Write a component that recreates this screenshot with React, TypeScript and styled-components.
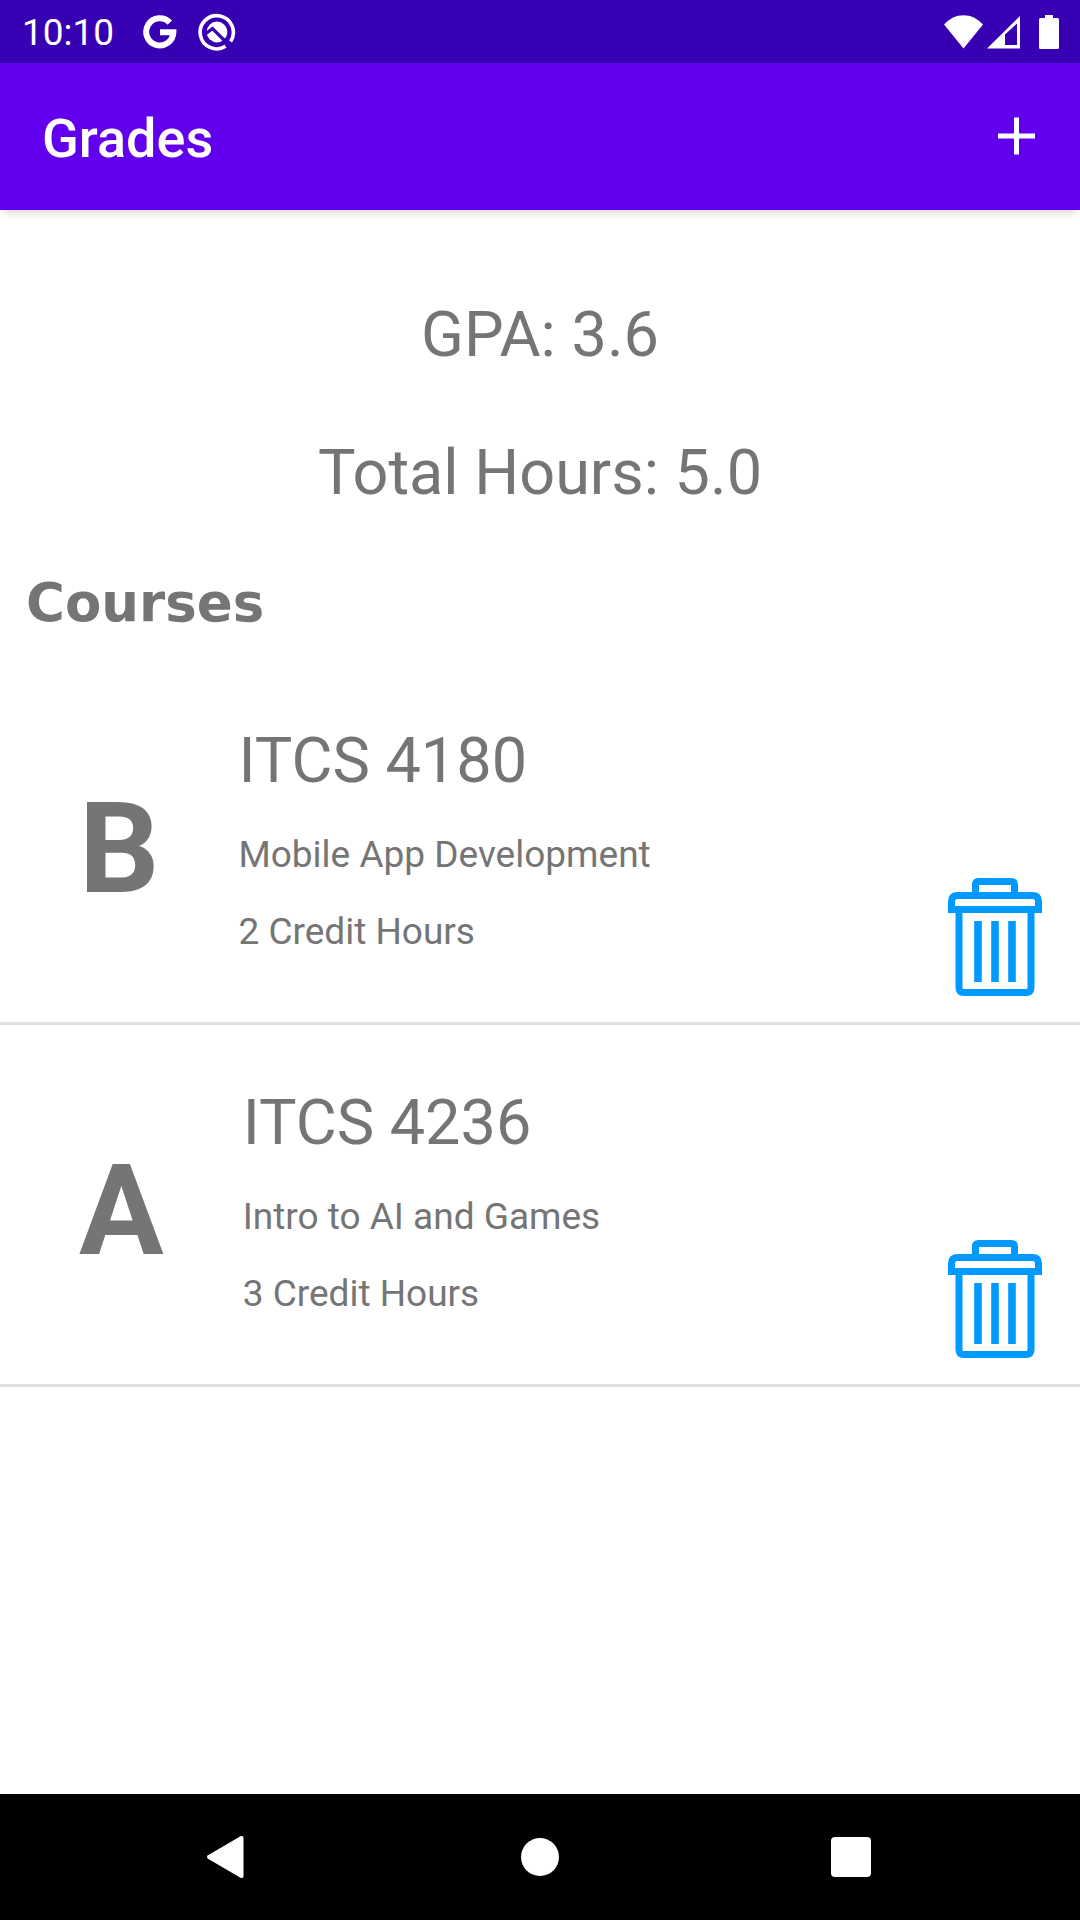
import React, { useState } from "react";
import styled, { createGlobalStyle } from "styled-components";

const GlobalStyle = createGlobalStyle`
  *, *::before, *::after { box-sizing: border-box; }
  body { margin: 0; background: #fff; font-family: Roboto, "Noto Sans", sans-serif; color: #757575; }
  h1, h2, h3, p, ul { margin: 0; padding: 0; }
`;

const Screen = styled.div`
  display: flex;
  flex-direction: column;
  min-height: 100vh;
`;

const StatusBar = styled.div`
  display: flex;
  align-items: center;
  justify-content: space-between;
  height: 63px;
  padding: 0 21px 0 22px;
  background: #3700b3;
  color: #fff;
`;

const StatusGroup = styled.div<{ $gap: number }>`
  display: flex;
  align-items: center;
  gap: ${(p) => p.$gap}px;
`;

const Clock = styled.time`
  margin-right: 8px;
  padding-top: 3px;
  font-size: 37px;
  line-height: 42px;
`;

const BatterySlot = styled.span`
  display: flex;
  padding-left: 15px;
`;

const AppBar = styled.header`
  display: flex;
  align-items: center;
  justify-content: space-between;
  height: 147px;
  padding: 0 32px 2px 42px;
  background: #6200ee;
  color: #fff;
  box-shadow: 0 7px 8px -4px rgba(0, 0, 0, 0.16);
`;

const Title = styled.h1`
  padding-top: 6px;
  font-size: 54px;
  font-weight: 500;
  line-height: 62px;
`;

const IconButton = styled.button`
  display: flex;
  align-items: center;
  justify-content: center;
  padding: 0;
  border: 0;
  background: none;
  color: inherit;
  cursor: pointer;
`;

const Main = styled.main`
  flex: 1;
`;

const Summary = styled.section`
  display: flex;
  flex-direction: column;
  gap: 54px;
  padding-top: 83px;
  text-align: center;
`;

const LargeText = styled.p`
  font-size: 63px;
  line-height: 84px;
`;

const SectionTitle = styled.h2`
  padding: 58px 26px 30px;
  font-family: "DejaVu Sans", Lato, sans-serif;
  font-size: 53px;
  font-weight: 700;
  line-height: 60px;
`;

const CourseList = styled.ul`
  list-style: none;
`;

const CourseRow = styled.li`
  display: flex;
  align-items: flex-start;
  gap: 79px;
  padding: 56px 38px 26px 79px;
  border-bottom: 3px solid #e0e0e0;
`;

const Grade = styled.strong`
  padding-top: 56px;
  font-size: 126px;
  font-weight: 700;
  line-height: 148px;
`;

const CourseInfo = styled.div`
  display: flex;
  flex: 1;
  flex-direction: column;
  gap: 26px;
  padding-bottom: 39px;
`;

const CourseCode = styled.h3`
  font-size: 63px;
  font-weight: 400;
  line-height: 84px;
`;

const Detail = styled.p`
  font-size: 37px;
  line-height: 51px;
`;

const DeleteButton = styled(IconButton)`
  align-self: flex-end;
  color: #0099ff;
`;

const NavBar = styled.nav`
  display: grid;
  grid-template-columns: repeat(3, 1fr);
  height: 126px;
  padding: 0 73px;
  background: #000;
  color: #fff;
`;

const GoogleIcon = () => (
  <svg width="34" height="34" viewBox="0 0 34 34" fill="none" stroke="currentColor" strokeWidth="6" aria-hidden="true">
    <path d="M26.8 7.6A13.6 13.6 0 1 0 30.4 17.2H17" />
  </svg>
);

const SearchBadgeIcon = () => (
  <svg width="38" height="38" viewBox="0 0 38 38" aria-hidden="true">
    <path d="M27.6 33.3A16.6 16.6 0 1 1 32.6 28.4" fill="none" stroke="currentColor" strokeWidth="3.6" />
    <circle cx="19" cy="19" r="10.4" fill="currentColor" />
    <path d="M8 20.5L14.5 15.5L31 32" fill="none" stroke="#3700b3" strokeWidth="3.2" />
  </svg>
);

const WifiIcon = () => (
  <svg width="39" height="34" viewBox="0 0 39 34" fill="currentColor" aria-hidden="true">
    <path d="M0 9.5C11-3 28-3 39 9.5L19.5 33.5Z" />
  </svg>
);

const SignalIcon = () => (
  <svg width="33" height="34" viewBox="0 0 33 34" fill="currentColor" fillRule="evenodd" aria-hidden="true">
    <path d="M33 1V33.5H0ZM30 8.500L18 19.500V30H30Z" />
  </svg>
);

const BatteryIcon = () => (
  <svg width="20" height="34" viewBox="0 0 20 34" fill="currentColor" aria-hidden="true">
    <path d="M6 0H14V3H18.500Q20 3 20 4.500V32.500Q20 34 18.500 34H1.500Q0 34 0 32.500V4.500Q0 3 1.500 3H6Z" />
  </svg>
);

const PlusIcon = () => (
  <svg width="64" height="64" viewBox="0 0 64 64" fill="currentColor" aria-hidden="true">
    <path d="M30 13.500H35V29.500H51V34.500H35V50.500H30V34.500H14V29.500H30Z" />
  </svg>
);

const TrashIcon = () => (
  <svg width="94" height="118" viewBox="0 0 94 118" fill="none" stroke="currentColor" strokeWidth="7" aria-hidden="true">
    <path d="M27.500 17V6.500Q27.500 3.500 30.500 3.500H63.500Q66.500 3.500 66.500 6.500V17" />
    <path d="M3.500 35V23.500Q3.500 17.500 9.500 17.500H84.500Q90.500 17.500 90.500 23.500V35M0 31.500H94" />
    <path d="M11 33V109.500Q11 114.500 16 114.500H78Q83 114.500 83 109.500V33" />
    <path d="M30 43V104M47 43V104M64 43V104" strokeWidth="7.600" />
  </svg>
);

const BackIcon = () => (
  <svg width="52" height="52" viewBox="0 0 52 52" fill="currentColor" aria-hidden="true">
    <path d="M5 24.200L37.500 5.300Q40.500 4 40.500 7V45Q40.500 48 37.500 46.700L5 27.800Q3 26 5 24.200Z" />
  </svg>
);

const HomeIcon = () => (
  <svg width="52" height="52" viewBox="0 0 52 52" fill="currentColor" aria-hidden="true">
    <circle cx="26" cy="26" r="19" />
  </svg>
);

const RecentsIcon = () => (
  <svg width="52" height="52" viewBox="0 0 52 52" fill="currentColor" aria-hidden="true">
    <rect x="6" y="6" width="40" height="40" rx="4" />
  </svg>
);

interface Course {
  code: string;
  name: string;
  hours: number;
  grade: "A" | "B" | "C" | "D" | "F";
}

const initialCourses: Course[] = [
  { code: "ITCS 4180", name: "Mobile App Development", hours: 2, grade: "B" },
  { code: "ITCS 4236", name: "Intro to AI and Games", hours: 3, grade: "A" },
];

const points = { A: 4, B: 3, C: 2, D: 1, F: 0 };

export default function App() {
  const [courses, setCourses] = useState(initialCourses);
  const hours = courses.reduce((sum, c) => sum + c.hours, 0);
  const total = courses.reduce((sum, c) => sum + c.hours * points[c.grade], 0);
  const gpa = hours ? total / hours : 0;

  return (
    <Screen>
      <GlobalStyle />
      <StatusBar>
        <StatusGroup $gap={21}>
          <Clock>10:10</Clock>
          <GoogleIcon />
          <SearchBadgeIcon />
        </StatusGroup>
        <StatusGroup $gap={4}>
          <WifiIcon />
          <SignalIcon />
          <BatterySlot>
            <BatteryIcon />
          </BatterySlot>
        </StatusGroup>
      </StatusBar>
      <AppBar>
        <Title>Grades</Title>
        <IconButton type="button" aria-label="Add course">
          <PlusIcon />
        </IconButton>
      </AppBar>
      <Main>
        <Summary>
          <LargeText>GPA: {gpa.toFixed(1)}</LargeText>
          <LargeText>Total Hours: {hours.toFixed(1)}</LargeText>
        </Summary>
        <SectionTitle>Courses</SectionTitle>
        <CourseList>
          {courses.map((course) => (
            <CourseRow key={course.code}>
              <Grade>{course.grade}</Grade>
              <CourseInfo>
                <CourseCode>{course.code}</CourseCode>
                <Detail>{course.name}</Detail>
                <Detail>{course.hours} Credit Hours</Detail>
              </CourseInfo>
              <DeleteButton
                type="button"
                aria-label={`Delete ${course.code}`}
                onClick={() => setCourses(courses.filter((c) => c !== course))}
              >
                <TrashIcon />
              </DeleteButton>
            </CourseRow>
          ))}
        </CourseList>
      </Main>
      <NavBar aria-label="System navigation">
        <IconButton type="button" aria-label="Back">
          <BackIcon />
        </IconButton>
        <IconButton type="button" aria-label="Home">
          <HomeIcon />
        </IconButton>
        <IconButton type="button" aria-label="Recent apps">
          <RecentsIcon />
        </IconButton>
      </NavBar>
    </Screen>
  );
}
